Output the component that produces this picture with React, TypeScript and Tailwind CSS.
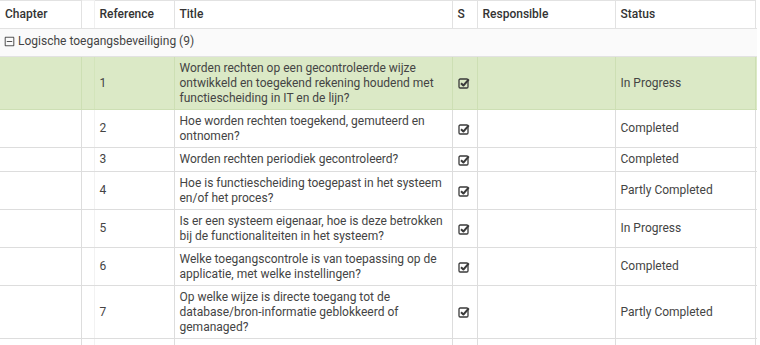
import React from 'react';
import { FaRegMinusSquare } from 'react-icons/fa';

type Row = { ref: string; title: string; status: string; active?: boolean };

const rows: Row[] = [
    { ref: '1', title: 'Worden rechten op een gecontroleerde wijze ontwikkeld en toegekend rekening houdend met functiescheiding in IT en de lijn?', status: 'In Progress', active: true },
    { ref: '2', title: 'Hoe worden rechten toegekend, gemuteerd en ontnomen?', status: 'Completed' },
    { ref: '3', title: 'Worden rechten periodiek gecontroleerd?', status: 'Completed' },
    { ref: '4', title: 'Hoe is functiescheiding toegepast in het systeem en/of het proces?', status: 'Partly Completed' },
    { ref: '5', title: 'Is er een systeem eigenaar, hoe is deze betrokken bij de functionaliteiten in het systeem?', status: 'In Progress' },
    { ref: '6', title: 'Welke toegangscontrole is van toepassing op de applicatie, met welke instellingen?', status: 'Completed' },
    { ref: '7', title: 'Op welke wijze is directe toegang tot de database/bron-informatie geblokkeerd of gemanaged?', status: 'Partly Completed' },
];

// check-square-o style icon
function CheckSquare() {
    return (
        <svg width="12" height="12" viewBox="0 0 12 12" className="text-[#3a3a3a]">
            <rect x="1" y="2" width="9" height="9" rx="1.2" fill="none" stroke="currentColor" strokeWidth="1.3" />
            <path d="M3 6.2 L5.4 8.5 L10.8 2.4" fill="none" stroke="currentColor" strokeWidth="2" strokeLinejoin="round" />
        </svg>
    );
}

export default function App() {
    const td = 'px-[5px] py-[3.5px] align-middle border-b';
    const th = 'px-[5px] font-medium border-t border-b border-r border-[#e2e2e2]';
    return (
        <div className="w-[760px] h-[345px] overflow-hidden bg-white font-['Roboto',sans-serif] text-[12px] leading-[15px] text-[#444]">
            <table className="table-fixed border-collapse w-[757px]">
                <colgroup>
                    <col className="w-[81px]" />
                    <col className="w-[13px]" />
                    <col className="w-[80px]" />
                    <col className="w-[278px]" />
                    <col className="w-[25px]" />
                    <col className="w-[138px]" />
                    <col className="w-[140px]" />
                    <col className="w-[2px]" />
                </colgroup>
                <thead>
                    <tr className="h-[28px] bg-white text-[#333] text-left">
                        <th className={th}>Chapter</th>
                        <th className="border-t border-b border-r border-[#f0f0f0] border-b-[#e2e2e2]"></th>
                        <th className={th}>Reference</th>
                        <th className={th}>Title</th>
                        <th className={th}>S</th>
                        <th className={th}>Responsible</th>
                        <th className={th}>Status</th>
                        <th className="border-b border-[#e2e2e2]"></th>
                    </tr>
                </thead>
                <tbody>
                    <tr className="h-[28px] bg-[#fafafa]">
                        <td colSpan={8} className="px-[4px] border-b border-[#e2e2e2]">
                            <span className="inline-flex items-center gap-[3px] text-[#444]">
                                <FaRegMinusSquare className="w-[11px] h-[11px] text-[#555]" />
                                Logische toegangsbeveiliging (9)
                            </span>
                        </td>
                    </tr>
                    {rows.map((r) => {
                        const line = r.active ? 'border-[#cddfb4]' : 'border-[#dddddd]';
                        return (
                            <tr key={r.ref} className={r.active ? 'bg-[#dbe9c6]' : 'bg-white'}>
                                <td className={`${td} border-r ${line}`}></td>
                                <td className={`${td} border-r ${line} ${r.active ? 'border-r-[#d3e4bb]' : 'border-r-[#f2f2f2]'}`}></td>
                                <td className={`${td} border-r ${line}`}>{r.ref}</td>
                                <td className={`${td} border-r ${line}`}>{r.title}</td>
                                <td className={`${td} border-r ${line}`}>
                                    <span className="flex h-[16px] items-center">
                                        <CheckSquare />
                                    </span>
                                </td>
                                <td className={`${td} border-r ${line}`}></td>
                                <td className={`${td} border-r ${line}`}>{r.status}</td>
                                <td className={`${td} ${line}`}></td>
                            </tr>
                        );
                    })}
                    <tr className="h-[40px] bg-white">
                        <td className="border-r border-[#dddddd]"></td>
                        <td className="border-r border-[#f2f2f2]"></td>
                        <td className="border-r border-[#dddddd]"></td>
                        <td className="border-r border-[#dddddd]"></td>
                        <td className="border-r border-[#dddddd]"></td>
                        <td className="border-r border-[#dddddd]"></td>
                        <td className="border-r border-[#dddddd]"></td>
                        <td></td>
                    </tr>
                </tbody>
            </table>
        </div>
    );
}
